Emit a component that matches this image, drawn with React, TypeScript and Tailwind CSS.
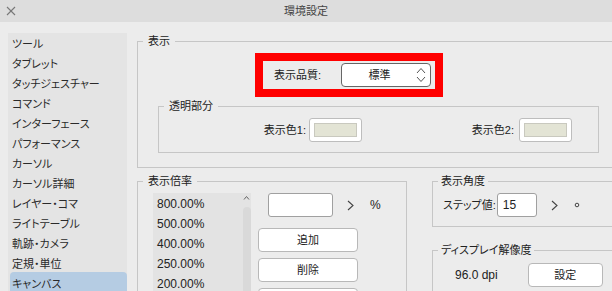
import React from "react";

const Chevron = () => (
  <svg width="7" height="11" viewBox="0 0 7 11" className="shrink-0">
    <polyline points="1,1 6,5.5 1,10" fill="none" stroke="#444" strokeWidth="1.1" />
  </svg>
);

const Swatch = () => (
  <div className="w-[53px] h-[24px] bg-white border border-[#bdbdbd] rounded-[3px] p-[4px] shrink-0">
    <div className="w-full h-full bg-[#e3e4d5] border border-[#c9c9bf]" />
  </div>
);

const Btn = ({ label }: { label: string }) => (
  <div className="w-[100px] h-[24px] bg-white border border-[#b8b8b8] rounded-[4px] flex items-center justify-center shrink-0">
    {label}
  </div>
);

export default function App() {
  const items = [
    "ツール",
    "タブレット",
    "タッチジェスチャー",
    "コマンド",
    "インターフェース",
    "パフォーマンス",
    "カーソル",
    "カーソル詳細",
    "レイヤー・コマ",
    "ライトテーブル",
    "軌跡・カメラ",
    "定規・単位",
  ];
  const zooms = ["800.00%", "500.00%", "400.00%", "250.00%", "200.00%"];
  return (
    <div className="w-[612px] h-[291px] overflow-hidden bg-[#ececec] text-[#222] text-[11px] font-['Liberation_Sans','Noto_Sans_CJK_JP',sans-serif] [font-feature-settings:'palt']">
      {/* title bar */}
      <div className="h-[22px] bg-[#dddddd] grid grid-cols-[1fr_auto_1fr] items-center">
        <svg width="10" height="10" viewBox="0 0 10 10" className="ml-[6px]">
          <line x1="1" y1="1" x2="9" y2="9" stroke="#777" strokeWidth="1.1" />
          <line x1="9" y1="1" x2="1" y2="9" stroke="#777" strokeWidth="1.1" />
        </svg>
        <div className="text-[#444] text-[11px]">環境設定</div>
        <div />
      </div>

      <div className="flex pt-[11px]">
        {/* sidebar */}
        <div className="ml-[8px] w-[119px] bg-[#e4e4e4] pt-[1px] shrink-0 flex flex-col">
          {items.map((t) => (
            <div key={t} className="h-[20px] shrink-0 flex items-center pl-[4px] text-[#2a2a2a]">
              {t}
            </div>
          ))}
          <div className="mt-[-2px] ml-[2px] h-[22px] shrink-0 pt-[2px] flex items-center pl-[2px] bg-[#b5cce3] rounded-[4px] text-[#2a2a2a]">
            キャンバス
          </div>
        </div>

        {/* main */}
        <div className="ml-[10px] w-[480px] shrink-0 flex flex-col">
          <fieldset className="border border-[#c6c6c6] w-[480px] pb-[14px]">
            <legend className="ml-[5px] px-[5px] leading-[16px]">表示</legend>
            <div className="ml-[117px] mt-[4px] w-[188px] h-[44px] border-[8px] border-[#ff0000] flex items-center pl-[11px]">
              <span>表示品質:</span>
              <div className="ml-[20px] w-[90px] h-[24px] bg-white border border-[#666] rounded-[4px] flex items-center shrink-0">
                <span className="flex-1 text-center pl-[2px]">標準</span>
                <svg width="12" height="18" viewBox="0 0 12 18" className="mr-[3px]">
                  <polyline points="2,7 6,2.5 10,7" fill="none" stroke="#555" strokeWidth="1" />
                  <polyline points="2,11 6,15.5 10,11" fill="none" stroke="#555" strokeWidth="1" />
                </svg>
              </div>
            </div>
            <fieldset className="ml-[20px] mt-[1px] w-[441px] border border-[#c6c6c6] pb-[10px]">
              <legend className="ml-[5px] px-[5px] leading-[16px]">透明部分</legend>
              <div className="flex items-center mt-[4px]">
                <div className="w-[203px] flex items-center justify-end gap-[3px]">
                  <span>表示色1:</span>
                  <Swatch />
                </div>
                <div className="w-[210px] flex items-center justify-end gap-[5px]">
                  <span>表示色2:</span>
                  <Swatch />
                </div>
              </div>
            </fieldset>
          </fieldset>

          <div className="flex items-start mt-[5px]">
            <fieldset className="w-[270px] h-[140px] border border-[#c6c6c6] shrink-0">
              <legend className="ml-[5px] px-[5px] leading-[16px]">表示倍率</legend>
              <div className="flex mt-[4px] pl-[15px]">
                <div className="w-[98px] h-[110px] bg-[#e3e3e3] flex shrink-0">
                  <div className="w-[89px] pt-[1px] flex flex-col">
                    {zooms.map((z) => (
                      <div key={z} className="h-[20px] shrink-0 flex items-center pl-[4px] text-[12px]">
                        {z}
                      </div>
                    ))}
                  </div>
                  <div className="w-[9px] flex flex-col items-center">
                    <svg width="7" height="6" viewBox="0 0 7 6" className="mt-[2px] shrink-0">
                      <polyline points="1,4.5 3.5,1.5 6,4.5" fill="none" stroke="#666" strokeWidth="1" />
                    </svg>
                    <div className="mt-[6px] w-[8px] flex-1 bg-[#d9d9d9] rounded-t-[4px]" />
                  </div>
                </div>
                <div className="ml-[7px] w-[100px] flex flex-col">
                  <div className="h-[24px] flex items-center">
                    <div className="ml-[10px] w-[65px] h-[24px] bg-white border border-[#a0a0a0] rounded-[3px] shrink-0" />
                    <div className="ml-[14px]">
                      <Chevron />
                    </div>
                    <span className="ml-[16px] text-[12px]">%</span>
                  </div>
                  <div className="mt-[11px] flex flex-col gap-[6px]">
                    <Btn label="追加" />
                    <Btn label="削除" />
                    <Btn label="" />
                  </div>
                </div>
              </div>
            </fieldset>

            <div className="ml-[25px] w-[200px] flex flex-col shrink-0">
              <fieldset className="w-[200px] border border-[#c6c6c6] pb-[9px]">
                <legend className="ml-[5px] px-[3px] leading-[16px]">表示角度</legend>
                <div className="flex items-center mt-[4px] pl-[10px]">
                  <span>ステップ値:</span>
                  <div className="ml-[1px] w-[40px] h-[24px] bg-white border border-[#a0a0a0] rounded-[3px] flex items-center pl-[5px] text-[12px] shrink-0">
                    15
                  </div>
                  <div className="ml-[14px]">
                    <Chevron />
                  </div>
                  <svg width="6" height="6" viewBox="0 0 6 6" className="ml-[16px]">
                    <circle cx="3" cy="3" r="1.8" fill="none" stroke="#444" strokeWidth="1" />
                  </svg>
                </div>
              </fieldset>
              <fieldset className="mt-[15px] w-[200px] h-[60px] border border-[#c6c6c6]">
                <legend className="ml-[5px] px-[3px] leading-[16px]">ディスプレイ解像度</legend>
                <div className="flex items-center mt-[5px] pl-[22px]">
                  <span className="text-[12px]">96.0 dpi</span>
                  <div className="ml-[30px] w-[75px] h-[24px] bg-white border border-[#b8b8b8] rounded-[4px] flex items-center justify-center shrink-0">
                    設定
                  </div>
                </div>
              </fieldset>
            </div>
          </div>
        </div>
      </div>
    </div>
  );
}
